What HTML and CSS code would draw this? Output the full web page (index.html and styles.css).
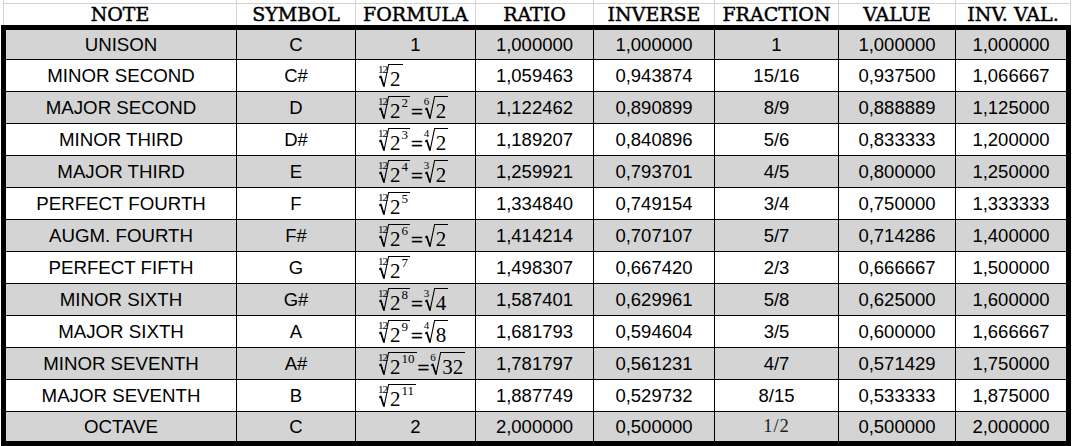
FILE: index.html
```html
<!DOCTYPE html>
<html>
<head>
<meta charset="utf-8">
<link rel="stylesheet" href="styles.css">
</head>
<body>
<div class="head">
  <div class="h">NOTE</div><div class="h">SYMBOL</div><div class="h">FORMULA</div><div class="h">RATIO</div><div class="h">INVERSE</div><div class="h">FRACTION</div><div class="h">VALUE</div><div class="h last">INV. VAL.</div>
</div>
<div class="tbl">
  <div class="row first gray">
    <div class="c note">UNISON</div><div class="c">C</div><div class="c">1</div><div class="c">1,000000</div><div class="c">1,000000</div><div class="c">1</div><div class="c">1,000000</div><div class="c">1,000000</div>
  </div>
  <div class="row">
    <div class="c note">MINOR SECOND</div><div class="c">C#</div>
    <div class="c fm"><span class="rt"><span class="ix">12</span><svg class="rs" viewBox="0 0 10 24" width="10" height="24"><path class="hv" d="M0.2 13.6 L1.8 12.4 L5 22.6"/><path class="th" d="M5 22.6 L9.6 0.5 L10 0.5"/></svg><span class="rc"><span class="b">2</span></span></span></div>
    <div class="c">1,059463</div><div class="c">0,943874</div><div class="c">15/16</div><div class="c">0,937500</div><div class="c">1,066667</div>
  </div>
  <div class="row gray">
    <div class="c note">MAJOR SECOND</div><div class="c">D</div>
    <div class="c fm"><span class="rt"><span class="ix">12</span><svg class="rs" viewBox="0 0 10 24" width="10" height="24"><path class="hv" d="M0.2 13.6 L1.8 12.4 L5 22.6"/><path class="th" d="M5 22.6 L9.6 0.5 L10 0.5"/></svg><span class="rc"><span class="b">2</span><span class="e">2</span></span></span><span class="eq">=</span><span class="rt"><span class="ix">6</span><svg class="rs" viewBox="0 0 10 24" width="10" height="24"><path class="hv" d="M0.2 13.6 L1.8 12.4 L5 22.6"/><path class="th" d="M5 22.6 L9.6 0.5 L10 0.5"/></svg><span class="rc"><span class="b">2</span></span></span></div>
    <div class="c">1,122462</div><div class="c">0,890899</div><div class="c">8/9</div><div class="c">0,888889</div><div class="c">1,125000</div>
  </div>
  <div class="row">
    <div class="c note">MINOR THIRD</div><div class="c">D#</div>
    <div class="c fm"><span class="rt"><span class="ix">12</span><svg class="rs" viewBox="0 0 10 24" width="10" height="24"><path class="hv" d="M0.2 13.6 L1.8 12.4 L5 22.6"/><path class="th" d="M5 22.6 L9.6 0.5 L10 0.5"/></svg><span class="rc"><span class="b">2</span><span class="e">3</span></span></span><span class="eq">=</span><span class="rt"><span class="ix">4</span><svg class="rs" viewBox="0 0 10 24" width="10" height="24"><path class="hv" d="M0.2 13.6 L1.8 12.4 L5 22.6"/><path class="th" d="M5 22.6 L9.6 0.5 L10 0.5"/></svg><span class="rc"><span class="b">2</span></span></span></div>
    <div class="c">1,189207</div><div class="c">0,840896</div><div class="c">5/6</div><div class="c">0,833333</div><div class="c">1,200000</div>
  </div>
  <div class="row gray">
    <div class="c note">MAJOR THIRD</div><div class="c">E</div>
    <div class="c fm"><span class="rt"><span class="ix">12</span><svg class="rs" viewBox="0 0 10 24" width="10" height="24"><path class="hv" d="M0.2 13.6 L1.8 12.4 L5 22.6"/><path class="th" d="M5 22.6 L9.6 0.5 L10 0.5"/></svg><span class="rc"><span class="b">2</span><span class="e">4</span></span></span><span class="eq">=</span><span class="rt"><span class="ix">3</span><svg class="rs" viewBox="0 0 10 24" width="10" height="24"><path class="hv" d="M0.2 13.6 L1.8 12.4 L5 22.6"/><path class="th" d="M5 22.6 L9.6 0.5 L10 0.5"/></svg><span class="rc"><span class="b">2</span></span></span></div>
    <div class="c">1,259921</div><div class="c">0,793701</div><div class="c">4/5</div><div class="c">0,800000</div><div class="c">1,250000</div>
  </div>
  <div class="row">
    <div class="c note">PERFECT FOURTH</div><div class="c">F</div>
    <div class="c fm"><span class="rt"><span class="ix">12</span><svg class="rs" viewBox="0 0 10 24" width="10" height="24"><path class="hv" d="M0.2 13.6 L1.8 12.4 L5 22.6"/><path class="th" d="M5 22.6 L9.6 0.5 L10 0.5"/></svg><span class="rc"><span class="b">2</span><span class="e">5</span></span></span></div>
    <div class="c">1,334840</div><div class="c">0,749154</div><div class="c">3/4</div><div class="c">0,750000</div><div class="c">1,333333</div>
  </div>
  <div class="row gray">
    <div class="c note">AUGM. FOURTH</div><div class="c">F#</div>
    <div class="c fm"><span class="rt"><span class="ix">12</span><svg class="rs" viewBox="0 0 10 24" width="10" height="24"><path class="hv" d="M0.2 13.6 L1.8 12.4 L5 22.6"/><path class="th" d="M5 22.6 L9.6 0.5 L10 0.5"/></svg><span class="rc"><span class="b">2</span><span class="e">6</span></span></span><span class="eq">=</span><span class="rt"><svg class="rs" viewBox="0 0 10 24" width="10" height="24"><path class="hv" d="M0.2 13.6 L1.8 12.4 L5 22.6"/><path class="th" d="M5 22.6 L9.6 0.5 L10 0.5"/></svg><span class="rc"><span class="b">2</span></span></span></div>
    <div class="c">1,414214</div><div class="c">0,707107</div><div class="c">5/7</div><div class="c">0,714286</div><div class="c">1,400000</div>
  </div>
  <div class="row">
    <div class="c note">PERFECT FIFTH</div><div class="c">G</div>
    <div class="c fm"><span class="rt"><span class="ix">12</span><svg class="rs" viewBox="0 0 10 24" width="10" height="24"><path class="hv" d="M0.2 13.6 L1.8 12.4 L5 22.6"/><path class="th" d="M5 22.6 L9.6 0.5 L10 0.5"/></svg><span class="rc"><span class="b">2</span><span class="e">7</span></span></span></div>
    <div class="c">1,498307</div><div class="c">0,667420</div><div class="c">2/3</div><div class="c">0,666667</div><div class="c">1,500000</div>
  </div>
  <div class="row gray">
    <div class="c note">MINOR SIXTH</div><div class="c">G#</div>
    <div class="c fm"><span class="rt"><span class="ix">12</span><svg class="rs" viewBox="0 0 10 24" width="10" height="24"><path class="hv" d="M0.2 13.6 L1.8 12.4 L5 22.6"/><path class="th" d="M5 22.6 L9.6 0.5 L10 0.5"/></svg><span class="rc"><span class="b">2</span><span class="e">8</span></span></span><span class="eq">=</span><span class="rt"><span class="ix">3</span><svg class="rs" viewBox="0 0 10 24" width="10" height="24"><path class="hv" d="M0.2 13.6 L1.8 12.4 L5 22.6"/><path class="th" d="M5 22.6 L9.6 0.5 L10 0.5"/></svg><span class="rc"><span class="b">4</span></span></span></div>
    <div class="c">1,587401</div><div class="c">0,629961</div><div class="c">5/8</div><div class="c">0,625000</div><div class="c">1,600000</div>
  </div>
  <div class="row">
    <div class="c note">MAJOR SIXTH</div><div class="c">A</div>
    <div class="c fm"><span class="rt"><span class="ix">12</span><svg class="rs" viewBox="0 0 10 24" width="10" height="24"><path class="hv" d="M0.2 13.6 L1.8 12.4 L5 22.6"/><path class="th" d="M5 22.6 L9.6 0.5 L10 0.5"/></svg><span class="rc"><span class="b">2</span><span class="e">9</span></span></span><span class="eq">=</span><span class="rt"><span class="ix">4</span><svg class="rs" viewBox="0 0 10 24" width="10" height="24"><path class="hv" d="M0.2 13.6 L1.8 12.4 L5 22.6"/><path class="th" d="M5 22.6 L9.6 0.5 L10 0.5"/></svg><span class="rc"><span class="b">8</span></span></span></div>
    <div class="c">1,681793</div><div class="c">0,594604</div><div class="c">3/5</div><div class="c">0,600000</div><div class="c">1,666667</div>
  </div>
  <div class="row gray">
    <div class="c note">MINOR SEVENTH</div><div class="c">A#</div>
    <div class="c fm"><span class="rt"><span class="ix">12</span><svg class="rs" viewBox="0 0 10 24" width="10" height="24"><path class="hv" d="M0.2 13.6 L1.8 12.4 L5 22.6"/><path class="th" d="M5 22.6 L9.6 0.5 L10 0.5"/></svg><span class="rc"><span class="b">2</span><span class="e">10</span></span></span><span class="eq">=</span><span class="rt"><span class="ix">6</span><svg class="rs" viewBox="0 0 10 24" width="10" height="24"><path class="hv" d="M0.2 13.6 L1.8 12.4 L5 22.6"/><path class="th" d="M5 22.6 L9.6 0.5 L10 0.5"/></svg><span class="rc"><span class="b">32</span></span></span></div>
    <div class="c">1,781797</div><div class="c">0,561231</div><div class="c">4/7</div><div class="c">0,571429</div><div class="c">1,750000</div>
  </div>
  <div class="row">
    <div class="c note">MAJOR SEVENTH</div><div class="c">B</div>
    <div class="c fm"><span class="rt"><span class="ix">12</span><svg class="rs" viewBox="0 0 10 24" width="10" height="24"><path class="hv" d="M0.2 13.6 L1.8 12.4 L5 22.6"/><path class="th" d="M5 22.6 L9.6 0.5 L10 0.5"/></svg><span class="rc"><span class="b">2</span><span class="e">11</span></span></span></div>
    <div class="c">1,887749</div><div class="c">0,529732</div><div class="c">8/15</div><div class="c">0,533333</div><div class="c">1,875000</div>
  </div>
  <div class="row last gray">
    <div class="c note">OCTAVE</div><div class="c">C</div><div class="c">2</div><div class="c">2,000000</div><div class="c">0,500000</div><div class="c serif">1/2</div><div class="c">0,500000</div><div class="c">2,000000</div>
  </div>
</div>
</body>
</html>
```
FILE: styles.css
```css
html, body {
  margin: 0;
  padding: 0;
  background: #fff;
}
body {
  width: 1074px;
  height: 446px;
  overflow: hidden;
  font-family: "Liberation Sans", Arial, sans-serif;
  color: #000;
}
.head {
  display: grid;
  grid-template-columns: 233px 119px 120px 118px 121px 124px 117px 116px;
  margin-left: 3px;
  width: 1068px;
  height: 25px;
  background: linear-gradient(#d2d2d2, #d2d2d2) no-repeat 0 3px / 100% 1px;
}
.h {
  border-left: 1px solid #d2d2d2;
  padding-top: 3px;
  line-height: 22px;
  text-align: center;
  font-family: "DejaVu Serif", "Liberation Serif", serif;
  font-size: 19px;
  -webkit-text-stroke: 0.45px #000;
  white-space: nowrap;
  box-sizing: border-box;
}
.h.last {
  border-right: 1px solid #d2d2d2;
}
.tbl {
  margin-left: 1px;
  width: 1060px;
  border: 5px solid #000;
}
.row {
  display: grid;
  grid-template-columns: 230px 119px 120px 118px 121px 124px 117px 111px;
  height: 32px;
  box-sizing: border-box;
  border-bottom: 1px solid #000;
}
.row.first {
  height: 30px;
}
.row.last {
  height: 29px;
  border-bottom: none;
}
.row.gray {
  background: #d4d4d4;
}
.c {
  display: flex;
  align-items: center;
  justify-content: center;
  font-size: 18.5px;
  white-space: nowrap;
}
.c + .c {
  border-left: 1px solid #000;
}
.c.note {
  font-size: 18.7px;
}
.c.serif {
  font-family: "Liberation Serif", serif;
  font-size: 18.5px;
  letter-spacing: 1px;
  color: #222;
}
.c.fm {
  justify-content: flex-start;
  align-items: center;
  padding-left: 23px;
  font-family: "Liberation Serif", serif;
}
.rt {
  position: relative;
  display: inline-flex;
  align-items: stretch;
  height: 24px;
}
.ix {
  position: absolute;
  left: -1px;
  top: 0;
  font-size: 11px;
  line-height: 11px;
  letter-spacing: -1px;
}
.rs {
  display: block;
  flex: none;
}
.rs path {
  fill: none;
  stroke: #000;
  stroke-linejoin: round;
}
.rs .hv {
  stroke-width: 1.8;
}
.rs .th {
  stroke-width: 1.1;
}
.rc {
  display: inline-flex;
  align-items: flex-start;
  border-top: 1px solid #000;
  padding: 5px 2px 0 1px;
  box-sizing: border-box;
  height: 24px;
}
.b {
  font-size: 21px;
  line-height: 18px;
}
.e {
  font-size: 13px;
  line-height: 13px;
  margin-top: -6px;
  margin-left: 1px;
}
.eq {
  font-size: 21px;
  line-height: 18px;
  align-self: flex-end;
  margin: 0 2px 2px 1px;
  -webkit-text-stroke: 0.4px #000;
}
```
